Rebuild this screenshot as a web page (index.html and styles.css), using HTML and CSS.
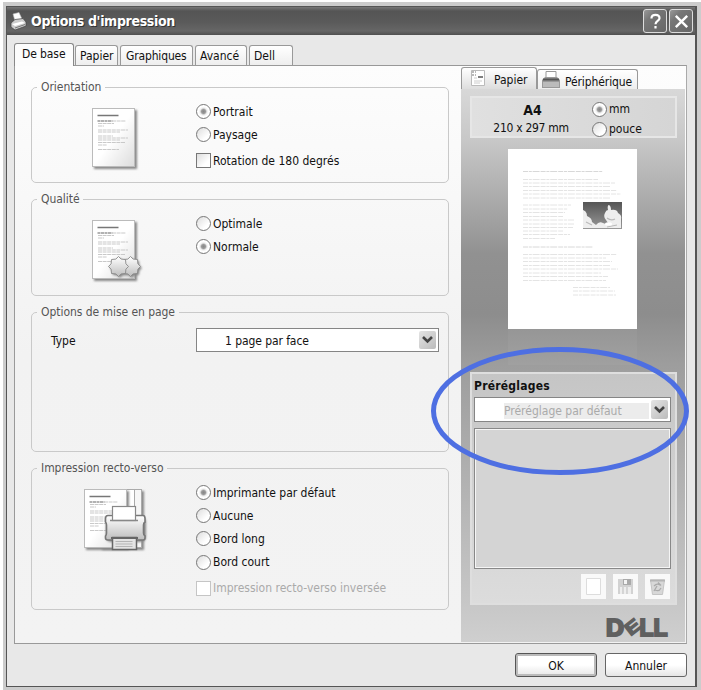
FILE: index.html
```html
<!DOCTYPE html>
<html lang="fr">
<head>
<meta charset="utf-8">
<title>Options d'impression</title>
<link rel="stylesheet" href="styles.css">
</head>
<body>
<svg class="defs" width="0" height="0" aria-hidden="true">
  <defs>
    <linearGradient id="paper" x1="0" y1="0" x2="1" y2="1"><stop offset=".5" stop-color="#fff"/><stop offset="1" stop-color="#dcdcdc"/></linearGradient>
    <linearGradient id="metal" x1="0" y1="0" x2="0" y2="1"><stop offset="0" stop-color="#fff"/><stop offset="1" stop-color="#bdbdbd"/></linearGradient>
    <linearGradient id="sky" x1="0" y1="0" x2="0" y2="1"><stop offset="0" stop-color="#555"/><stop offset="1" stop-color="#999"/></linearGradient>
    <filter id="soft"><feGaussianBlur stdDeviation="1"/></filter>
    <filter id="cloud"><feGaussianBlur stdDeviation=".6"/></filter>
    <g id="doc">
      <rect x="2" y="2" width="43" height="59" fill="#888" filter="url(#soft)"/>
      <rect x=".5" y=".5" width="42" height="58" fill="url(#paper)" stroke="#bbb"/>
      <path d="M5.500 7.500h21" stroke="#777" stroke-width="1.500"/>
      <path d="M5.500 13h15" stroke="#999" stroke-width="1.300" stroke-dasharray="3 .5"/>
      <path d="M20 13h14M6 15.500h16M6 18h6M6 22h30M6 24h22M6 28h15M6 30h30M6 32h22M6 34.500h27M6 37h9M6 41.500h21" stroke="#c9c9c9" stroke-dasharray="4 .6"/>
    </g>
    <path id="burst" d="M0-10 2.700-7.400 7-7 7.400-2.700 10 0 7.400 2.700 7 7 2.700 7.400 0 10-2.700 7.400-7 7-7.400 2.700-10 0-7.400-2.700-7-7-2.700-7.400Z"/>
  </defs>
</svg>
<main class="window">
  <header class="titlebar">
    <svg class="app-icon" width="17" height="19" viewBox="0 0 17 19">
      <path d="M3 2 9 .5 12 7 5 9Z" fill="#fff" stroke="#bbb" stroke-width=".6"/>
      <path d="M1 11 5 7.500 13 6.500 16 10v4L5 18 1 15Z" fill="#ccc" stroke="#444" stroke-width=".7"/>
      <path d="M2 12 12 9.500 15 11 5 14Z" fill="#fff"/><path d="M5 16 15 12.500" stroke="#777"/>
    </svg>
    <h1>Options d'impression</h1>
    <div class="caption">
      <span class="capbtn"><svg width="21" height="21" viewBox="0 0 21 21"><path d="M6.500 7.500V7Q6.500 3.800 10.500 3.800T14.500 7.300C14.500 10 10.500 10 10.500 13.200M10.500 15v2.500" fill="none" stroke="#fff" stroke-width="2.200"/></svg></span>
      <span class="capbtn"><svg width="21" height="21" viewBox="0 0 21 21"><path d="M4.800 4.800 16.200 16.200M16.200 4.800 4.800 16.200" stroke="#fff" stroke-width="2.400"/></svg></span>
    </div>
  </header>

  <nav class="tabs">
    <span class="tab active t1">De base</span><span class="tab t2">Papier</span><span class="tab t3">Graphiques</span><span class="tab t4">Avancé</span><span class="tab t5">Dell</span>
  </nav>

  <div class="sheet">
    <form class="groups">
      <fieldset class="g-orient">
        <legend>Orientation</legend>
        <svg class="pic" width="48" height="63" viewBox="0 0 48 63"><use href="#doc"/></svg>
        <div class="choices">
          <label><i class="radio on"></i><span>Portrait</span></label>
          <label><i class="radio"></i><span>Paysage</span></label>
          <label class="gap"><i class="check"></i><span>Rotation de 180 degrés</span></label>
        </div>
      </fieldset>
      <fieldset class="g-qual">
        <legend>Qualité</legend>
        <svg class="pic" width="52" height="63" viewBox="0 0 52 63"><use href="#doc"/>
          <g fill="#888" filter="url(#soft)"><use href="#burst" x="28" y="48"/><use href="#burst" x="40" y="48"/></g>
          <g fill="url(#metal)" stroke="#888" stroke-width=".9"><use href="#burst" x="38.500" y="46.500"/><use href="#burst" x="26.500" y="46.500"/></g>
        </svg>
        <div class="choices">
          <label><i class="radio"></i><span>Optimale</span></label>
          <label><i class="radio on"></i><span>Normale</span></label>
        </div>
      </fieldset>
      <fieldset class="g-layout">
        <legend>Options de mise en page</legend>
        <span class="type">Type</span>
        <div class="select"><span class="value">1 page par face</span><span class="drop"><svg width="11" height="8" viewBox="0 0 11 8"><path d="M1 1 5.500 5.500 10 1" fill="none" stroke="#444" stroke-width="2.600"/></svg></span></div>
      </fieldset>
      <fieldset class="g-duplex">
        <legend>Impression recto-verso</legend>
        <svg class="pic" width="64" height="64" viewBox="0 0 64 64">
          <rect x="18" y="2" width="42" height="59" fill="#888" filter="url(#soft)"/>
          <rect x="15.500" y=".5" width="42" height="58" fill="#f6f6f6" stroke="#aaa"/>
          <rect x="8.500" y=".5" width="42" height="58" fill="#fff" stroke="#aaa"/>
          <use href="#doc"/>
          <rect x="22" y="28" width="40" height="25" rx="5" fill="#888" filter="url(#soft)"/>
          <path d="M24 26.500h35q2 0 2 3v3.500q-1.500 1-1.500 3v8q0 2 1.500 3v2q0 2-2 2h-35q-2.500 0-2.500-2v-2q1-1 1-3v-8q0-2-1-3v-3.500q0-3 2.500-3Z" fill="url(#metal)" stroke="#777" stroke-width="1.600"/>
          <rect x="28.500" y="17.500" width="23" height="14" fill="#fff" stroke="#888" stroke-width="1.200"/>
          <path d="M26 31.500h28" stroke="#888" stroke-width="1.500"/>
          <path d="M28.500 48.500h24v12h-24Z" fill="#e4e4e4" stroke="#666" stroke-width="1.500"/><path d="M27 49h27" stroke="#666" stroke-width="2"/>
          <path d="M31.500 52.500h17M31.500 55h17M31.500 57.500h17" stroke="#b5b5b5"/>
        </svg>
        <div class="choices">
          <label><i class="radio on"></i><span>Imprimante par défaut</span></label>
          <label><i class="radio"></i><span>Aucune</span></label>
          <label><i class="radio"></i><span>Bord long</span></label>
          <label><i class="radio"></i><span>Bord court</span></label>
          <label class="gap off"><i class="check"></i><span>Impression recto-verso inversée</span></label>
        </div>
      </fieldset>
    </form>

    <aside class="side">
      <nav class="sidetabs">
        <span class="stab s1"><svg width="14" height="16" viewBox="0 0 14 16"><path d="M.5.500h13v15H.5Z" fill="#fff" stroke="#bbb"/><path d="M1 2h4M1 5h4" stroke="#777" stroke-dasharray="2 1"/><path d="M7 7h5" stroke="#555" stroke-width="1.500"/><path d="M3 8h3M3 11h8M3 13h6" stroke="#ccc"/></svg><span>Papier</span></span>
        <span class="stab s2"><svg width="18" height="17" viewBox="0 0 18 17"><path d="M4 7V.5h10V7" fill="#fff" stroke="#999"/><path d="M0 9 3 6h12l3 3v8H0Z" fill="#999"/><path d="M1 8.500h16" stroke="#555" stroke-width="2"/><path d="M1 11h16v5H1Z" fill="#bbb"/></svg><span>Périphérique</span></span>
      </nav>
      <div class="stage">
        <div class="info">
          <div class="size"><b>A4</b><span>210 x 297 mm</span></div>
          <div class="units"><label><i class="radio on"></i><span>mm</span></label><label><i class="radio"></i><span>pouce</span></label></div>
        </div>
        <svg class="preview" width="129" height="216" viewBox="0 0 129 216">
          <rect y="180" width="129" height="36" fill="#fff" opacity=".04"/>
          <rect width="129" height="180" fill="#fff"/>
          <g stroke="#e4e4e4" stroke-width="1" stroke-dasharray="5 .8 3 .8 7 1">
            <path d="M15 22.500h80M15 98h70" stroke="#d8d8d8"/>
            <path d="M15 30.500h75M15 34h92M15 37.500h88M15 41.500h94M15 45h98M15 49h87"/>
            <path d="M15 56h48M15 60h45M15 63.500h42M15 67.500h40M15 71h51M15 75h51M15 78.500h50M15 82h40M15 85.500h47M15 89.500h32"/>
            <path d="M15 105.500h94M15 109h83M15 112.500h89M15 116.500h88M15 120h95M15 124h78M15 127.500h85M15 131.500h83M65 138.500h37M65 142h42M65 146h43"/>
          </g>
          <svg x="75" y="53" width="39" height="27">
            <rect width="39" height="27" fill="url(#sky)"/>
            <path filter="url(#cloud)" d="M-3 7Q4 8 4 14q5 2 5 6l4 3q3-4 7-2l5 2q0-3-2-5-3-3-1-7 1-3 3-3-1-5 1-5 2 1 2 5 6-1 7 3 4 2 3 6v9H-3Z" fill="#eee"/>
            <path d="M24 16q4 3 8 1M24 25l10-2M3 20l6 3" stroke="#bbb" fill="none" stroke-width="1.200"/>
            <rect x="22" y="20.500" width="7" height="3" rx="1.500" fill="#fff"/>
          </svg>
        </svg>
        <section class="presets">
          <h2>Préréglages</h2>
          <div class="select"><span class="value">Préréglage par défaut</span><span class="drop"><svg width="11" height="8" viewBox="0 0 11 8"><path d="M1 1 5.500 5.500 10 1" fill="none" stroke="#444" stroke-width="2.600"/></svg></span></div>
          <div class="list"></div>
          <div class="tools">
            <span><svg width="17" height="17" viewBox="0 0 17 17"><path d="M1.500.500h14v16h-14Z" fill="#fff" stroke="#ddd"/></svg></span>
            <span><svg width="17" height="17" viewBox="0 0 17 17"><path d="M1 1h15v15H1Z" fill="#d2d2d2"/><path d="M6 1h8v6H6Z" fill="#aaa"/><path d="M7 2h3v4H7Z" fill="#f4f4f4"/><path d="M3 9h11v7H3Z" fill="#eee"/><path d="M6 9v7M10 9v7" stroke="#bbb"/></svg></span>
            <span><svg width="17" height="17" viewBox="0 0 17 17"><path d="M1.500 2h14l-2 14.500h-10Z" fill="#d8d8d8" stroke="#c4c4c4"/><path d="M1 2.500h15" stroke="#b5b5b5" stroke-width="2"/><path d="M5 8q3-3 6-1M12 10q-2 4-6 2M9 4.500l3 3M5 13l3-5" stroke="#aaa" fill="none" stroke-width="1.300"/></svg></span>
          </div>
        </section>
        <svg class="logo" width="74" height="32" viewBox="-6 -6 74 32" font-family="Liberation Sans" font-weight="bold" font-size="23" fill="#606060" stroke="#606060" stroke-width="2">
          <text x="0" y="17.500" textLength="18" lengthAdjust="spacingAndGlyphs">D</text>
          <text x="-7" y="6.500" font-size="18" stroke-width="1.300" textLength="15" lengthAdjust="spacingAndGlyphs" transform="translate(26 9) rotate(-38)">E</text>
          <text x="33.500" y="17.500" textLength="28" lengthAdjust="spacingAndGlyphs">LL</text>
        </svg>
      </div>
    </aside>
  </div>
  <footer class="actions"><button class="primary" type="button">OK</button><button type="button">Annuler</button></footer>
</main>
<svg class="callout" width="262" height="132" viewBox="0 0 262 132"><ellipse cx="131" cy="66" rx="126.500" ry="61.500" fill="none" stroke="#4e6fe2" stroke-width="5"/></svg>
</body>
</html>
```
FILE: styles.css
```css
* { box-sizing: border-box; }
body {
  margin: 0; width: 701px; height: 690px; overflow: hidden;
  background: #ccc; border: solid #fff; border-width: 2px 0 0 3px; padding: 4px 0 0 3px;
  font: 12px/14px "DejaVu Sans Condensed", "DejaVu Sans", sans-serif; font-stretch: condensed;
  color: #111; position: relative;
}
.defs { display: block; position: absolute; }
svg { display: block; flex: none; }
.window { width: 691px; height: 681px; border: 1px solid #555; background: #e8e8e8; border-right-width: 2px; }

.titlebar {
  height: 28px; display: flex; align-items: center; padding: 0 2px 0 3px; color: #fff;
  background: linear-gradient(#777 0, #555 4px, #5a5a5a 15px, #666 24px, #505050);
}
.titlebar h1 { margin: 0 0 0 4px; font-size: 14px; line-height: 18px; letter-spacing: -.33px; text-shadow: 1px 1px #333; }
.caption { display: flex; gap: 2px; margin-left: auto; }
.capbtn { width: 24px; height: 24px; border: 1px solid #ddd; border-radius: 3px; background: linear-gradient(135deg, #999, #777 30%, #666); display: grid; place-items: center; }

.tabs { height: 30px; padding: 8px 0 0 7px; display: flex; align-items: flex-end; }
.tab {
  height: 20px; border: 1px solid #999; border-bottom: 0; border-radius: 3px 3px 0 0;
  background: linear-gradient(#fff, #eee); padding: 3px 0 0 4px; margin-right: 2px; white-space: nowrap;
}
.tab.active { height: 23px; background: #fcfcfc; margin: 0 1px -1px 0; padding: 3px 0 0 7px; border-color: #888; position: relative; }
.t1 { width: 60px; letter-spacing: -.1px; } .t2 { width: 43px; } .t3 { width: 73px; letter-spacing: -.15px; padding-left: 5px; } .t4 { width: 52px; } .t5 { width: 44px; }

.sheet {
  margin-left: 7px; width: 673px; height: 579px; border: 1px solid #999; border-right-color: #aaa;
  display: flex; background: linear-gradient(#fdfdfd, #f2f2f2 50%, #f3f3f3);
}
.groups { width: 446px; padding: 14px 0 0 16px; display: flex; flex-direction: column; }
fieldset {
  width: 418px; margin: 0 0 9px; padding: 0; border: 1px solid #c9c9c9; border-radius: 5px;
  display: grid; grid-template-columns: 164px 1fr; align-content: start;
}
legend { margin-left: 5px; padding: 0 4px; line-height: 14px; color: #555; letter-spacing: -.05px; }
.g-orient { height: 103px; } .g-qual { height: 104px; }
.g-layout { height: 147px; } .g-duplex { height: 149px; }
.pic { margin: 14px 0 0 60px; }
.g-duplex .pic { margin: 14px 0 0 52px; }
.choices { padding-top: 6px; }
label { display: flex; align-items: center; height: 23px; gap: 2px; white-space: nowrap; }
.g-duplex label { height: 23.200px; }
label.gap { margin-top: 3px; }
label.off { color: #aaa; }
.radio, .check { width: 15px; height: 15px; flex: none; border: 1px solid #777; background: linear-gradient(135deg, #ddd, #fff 70%); }
.radio { border-radius: 50%; border-width: 1.500px; }
.radio.on { background: radial-gradient(circle, #888 0, #999 2px, #eee 3.500px, #fff 5px); }
.off .check { border-color: #c5c5c5; background: #fff; }

.type { margin: 15px 0 0 19px; }
.select { display: flex; height: 25px; background: #fff; border: 1px solid #858585; padding: 2px; }
.g-layout .select { width: 243px; margin-top: 9px; height: 24px; }
.g-layout .value { padding: 3px 0 0 26px; flex: 1; letter-spacing: -.08px; }
.drop { width: 17px; border-radius: 2px; background: linear-gradient(135deg, #e4e4e4, #bbb); display: grid; place-items: center; }

.side { width: 224px; height: 576px; }
.sidetabs { height: 23px; display: flex; align-items: flex-end; }
.stab { display: flex; border: 1px solid #999; border-bottom: 0; border-radius: 3px 3px 0 0; }
.s1 { width: 76px; height: 22px; padding: 2px 0 0 9px; gap: 9px; background: linear-gradient(#fff, #ddd); }
.s1 span { padding-top: 3px; }
.s2 { width: 101px; height: 20px; padding: 1px 0 0 4px; gap: 5px; background: linear-gradient(#fff, #eee); }
.s2 span { padding-top: 4px; letter-spacing: -.1px; }
.stage {
  height: 553px; padding: 7px 9px 0;
  background: linear-gradient(#d8d8d8 0, #c8c8c8 50px, #919191 165px, #8d8d8d 225px, #9d9d9d 275px, #c6c6c6 510px, #cfcfcf);
}
.info { height: 42px; border: 2px solid #e6e6e6; background: linear-gradient(90deg, #e0e0e0, #d5d5d5); display: flex; margin-right: -1px; }
.size { width: 118px; text-align: center; padding-top: 4px; }
.size b { display: block; font-size: 14px; line-height: 16px; padding-left: 3px; }
.size span { display: block; padding-top: 3px; letter-spacing: -.3px; }
.units { margin-left: 2px; padding-top: 1px; }
.units label { height: 20px; }
.preview { margin: 11px 0 0 38px; }
.presets { margin: 7px -1px 0 0; height: 233px; border: 2px solid #dedede; padding: 5px 3px 0; background: linear-gradient(#c5c5c5, #d8d8d8 80%, #dcdcdc); }
.presets h2 { margin: 0 0 4px -1px; font-size: 12px; line-height: 14px; letter-spacing: .22px; }
.presets .select { width: 197px; margin-left: -1px; }
.presets .value { flex: 1; margin: 3px 2px 0 27px; height: 16px; padding-top: 1px; line-height: 15px; background: #ececec; color: #aaa; }
.list { margin: 6px 0 0 -1px; width: 197px; height: 141px; background: #d4d4d4; border: 1px solid #888; outline: 1px solid #f5f5f5; outline-offset: -2px; }
.tools { display: flex; justify-content: flex-end; gap: 7px; padding: 5px 2px 0 0; }
.tools span { width: 25px; height: 25px; background: #f9f9f9; display: grid; place-items: center; }
.logo { margin: 7px 0 0 130px; }

.actions { display: flex; justify-content: flex-end; gap: 8px; padding: 9px 8px 0 0; }
.actions button {
  width: 82px; height: 24px; padding: 1px 0 0; font: inherit; color: #111; border: 1px solid #666; border-radius: 3px;
  background: linear-gradient(#fff 50%, #e5e5e5);
}
.actions .primary { border-color: #555; box-shadow: inset 0 0 0 2px #bbb; }
.callout { position: absolute; left: 426px; top: 343px; }
```
